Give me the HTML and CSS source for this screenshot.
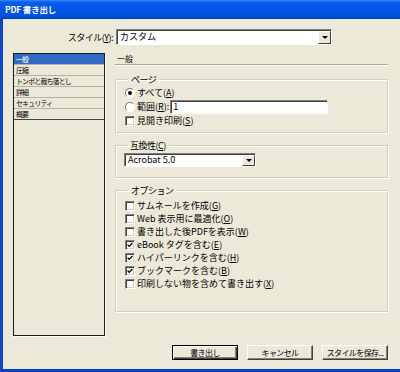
FILE: index.html
```html
<!DOCTYPE html>
<html lang="ja">
<head>
  <meta charset="utf-8">
  <title>PDF 書き出し</title>
  <link rel="stylesheet" href="styles.css">
</head>
<body>

  <div class="window">
    <div class="titlebar">PDF 書き出し</div>

    <div class="client">
      <div class="style-row">
        <label class="style-label">スタイル(<u>Y</u>):</label>
        <div class="combo combo-style">
          <span class="combo-text">カスタム</span>
          <span class="combo-btn"><i></i></span>
        </div>
      </div>

      <div class="main">
        <ul class="nav">
          <li class="active">一般</li>
          <li>圧縮</li>
          <li>トンボと裁ち落とし</li>
          <li>詳細</li>
          <li>セキュリティ</li>
          <li>概要</li>
        </ul>

        <div class="panel">
          <div class="panel-title">一般</div>

          <fieldset class="group group-page">
            <legend>ページ</legend>
            <div class="row"><span class="radio checked"></span>すべて(<u>A</u>)</div>
            <div class="row row-range"><span class="radio"></span>範囲(<u>R</u>):<span class="textbox">1</span></div>
            <div class="row"><span class="check"></span>見開き印刷(<u>S</u>)</div>
          </fieldset>

          <fieldset class="group group-compat">
            <legend>互換性(<u>C</u>)</legend>
            <div class="combo combo-compat">
              <span class="combo-text">Acrobat 5.0</span>
              <span class="combo-btn"><i></i></span>
            </div>
          </fieldset>

          <fieldset class="group group-options">
            <legend>オプション</legend>
            <div class="row"><span class="check"></span>サムネールを作成(<u>G</u>)</div>
            <div class="row"><span class="check"></span>Web 表示用に最適化(<u>O</u>)</div>
            <div class="row"><span class="check"></span>書き出した後PDFを表示(<u>W</u>)</div>
            <div class="row"><span class="check checked"><svg viewBox="0 0 10 10"><path d="M2 4.5 L4 6.7 L8 2.6"/></svg></span>eBook タグを含む(<u>E</u>)</div>
            <div class="row"><span class="check checked"><svg viewBox="0 0 10 10"><path d="M2 4.5 L4 6.7 L8 2.6"/></svg></span>ハイパーリンクを含む(<u>H</u>)</div>
            <div class="row"><span class="check checked"><svg viewBox="0 0 10 10"><path d="M2 4.5 L4 6.7 L8 2.6"/></svg></span>ブックマークを含む(<u>B</u>)</div>
            <div class="row"><span class="check"></span>印刷しない物を含めて書き出す(<u>X</u>)</div>
          </fieldset>
        </div>
      </div>

      <div class="buttons">
        <button class="btn btn-default">書き出し</button>
        <button class="btn">キャンセル</button>
        <button class="btn">スタイルを保存...</button>
      </div>
    </div>
  </div>

</body>
</html>
```

FILE: styles.css
```css
body {
  margin: 0;
  font-family: "Noto Sans CJK JP", "Liberation Sans", sans-serif;
  font-size: 9px;
  color: #000;
}
u {
  text-decoration: underline;
}
.window {
  width: 400px;
  height: 372px;
  background: #ece9d8;
  display: flex;
  flex-direction: column;
  overflow: hidden;
}
.titlebar {
  height: 19px;
  line-height: 19px;
  padding-left: 5px;
  color: #fff;
  font-size: 8.5px;
  font-weight: bold;
  letter-spacing: -0.2px;
  background: linear-gradient(#3d8df7 0, #0a5ded 2px, #0055e5 9px, #0052df 15px, #0043c6 19px);
}
.client {
  flex: 1;
  display: flex;
  flex-direction: column;
  border-left: 3px solid #0a44d2;
  border-bottom: 3px solid #0a3fc8;
}

/* style row */
.style-row {
  display: flex;
  align-items: center;
  height: 16px;
  margin-top: 10px;
}
.style-label {
  width: 110px;
  margin-right: 3px;
  text-align: right;
  letter-spacing: -0.5px;
}
.combo {
  display: flex;
  box-sizing: border-box;
  background: #fff;
  border: 1px solid;
  border-color: #808080 #fff #fff #808080;
  box-shadow: inset 1px 1px 0 #404040;
}
.combo-style {
  width: 216px;
  height: 16px;
}
.combo-text {
  flex: 1;
  padding-left: 3px;
  line-height: 13px;
}
.combo-btn {
  width: 11px;
  margin: 1px 0 0 0;
  background: #ece9d8;
  border: 1px solid;
  border-color: #fff #404040 #404040 #fff;
  display: flex;
  align-items: center;
  justify-content: center;
}
.combo-btn i {
  width: 0;
  height: 0;
  border-left: 3px solid transparent;
  border-right: 3px solid transparent;
  border-top: 3px solid #000;
}

/* body */
.main {
  display: flex;
  height: 283px;
  margin-top: 8px;
}
.nav {
  list-style: none;
  margin: 0 0 0 10px;
  padding: 0;
  width: 92px;
  box-sizing: border-box;
  border: 1px solid #1a1a1a;
  box-shadow: 1px 1px 0 #fff;
  font-size: 7px;
  letter-spacing: -0.9px;
}
.nav li {
  height: 10px;
  line-height: 10px;
  padding-left: 2px;
  border-bottom: 1px solid #b5b2a3;
  white-space: nowrap;
}
.nav li:last-child {
  border-bottom-color: #444;
}
.nav li.active {
  background: #316ac5;
  color: #fff;
}
.panel {
  flex: 1;
  margin: 0 12px 0 10px;
}
.panel-title {
  height: 10px;
  line-height: 10px;
  margin-top: 1px;
  padding-left: 2px;
  font-size: 8px;
  border-bottom: 1px solid #aca899;
  box-shadow: 0 1px 0 #fff;
}

.group {
  margin: 0;
  padding: 0 0 0 9px;
  min-width: 0;
  border: 1px solid #d0cdbd;
  box-shadow: 1px 1px 0 #fff, inset 1px 1px 0 #fff;
}
.group legend {
  padding: 0 3px;
  margin-left: 3px;
  line-height: 11px;
  letter-spacing: -0.5px;
}
.group-page {
  margin-top: 9px;
  padding-top: 1px;
  padding-bottom: 5px;
}
.group-compat {
  margin-top: 7px;
  padding-left: 8px;
  padding-top: 1px;
  padding-bottom: 10px;
}
.group-options {
  margin-top: 7px;
  padding-top: 3px;
  padding-bottom: 21px;
}
.row {
  display: flex;
  align-items: center;
  height: 13px;
  white-space: nowrap;
}
.row-range {
  height: 15px;
}
.radio {
  width: 10px;
  height: 10px;
  box-sizing: border-box;
  margin-right: 2px;
  border-radius: 50%;
  background: #fff;
  border: 1px solid;
  border-color: #808080 #fff #fff #808080;
  display: flex;
  align-items: center;
  justify-content: center;
}
.radio.checked::after {
  content: "";
  width: 4px;
  height: 4px;
  border-radius: 50%;
  background: #000;
}
.check {
  width: 10px;
  height: 10px;
  box-sizing: border-box;
  margin-right: 2px;
  background: #fff;
  border: 1px solid;
  border-color: #808080 #fff #fff #808080;
  box-shadow: inset 1px 1px 0 #404040, inset -1px -1px 0 #d4d0c8;
  display: flex;
}
.check svg {
  width: 8px;
  height: 8px;
  fill: none;
  stroke: #000;
  stroke-width: 1.7;
}
.textbox {
  width: 158px;
  height: 14px;
  margin-left: 1px;
  box-sizing: border-box;
  padding-left: 2px;
  line-height: 11px;
  background: #fff;
  border: 1px solid;
  border-color: #808080 #fff #fff #808080;
  box-shadow: inset 1px 1px 0 #404040;
}
.combo-compat {
  width: 132px;
  height: 14px;
  margin-top: 1px;
}
.combo-compat .combo-text {
  line-height: 11px;
}

/* buttons */
.buttons {
  display: flex;
  justify-content: flex-end;
  gap: 9px;
  margin: 9px 12px 0 0;
}
.btn {
  width: 66px;
  height: 15px;
  padding: 0;
  font: inherit;
  font-size: 8px;
  letter-spacing: -0.6px;
  white-space: nowrap;
  color: #000;
  background: #ece9d8;
  border: 1px solid;
  border-color: #fff #404040 #404040 #fff;
  box-shadow: inset -1px -1px 0 #808080;
}
.btn-default {
  border: 1px solid #000;
  box-shadow: inset 1px 1px 0 #fff, inset -1px -1px 0 #404040, inset -2px -2px 0 #808080;
}
```
